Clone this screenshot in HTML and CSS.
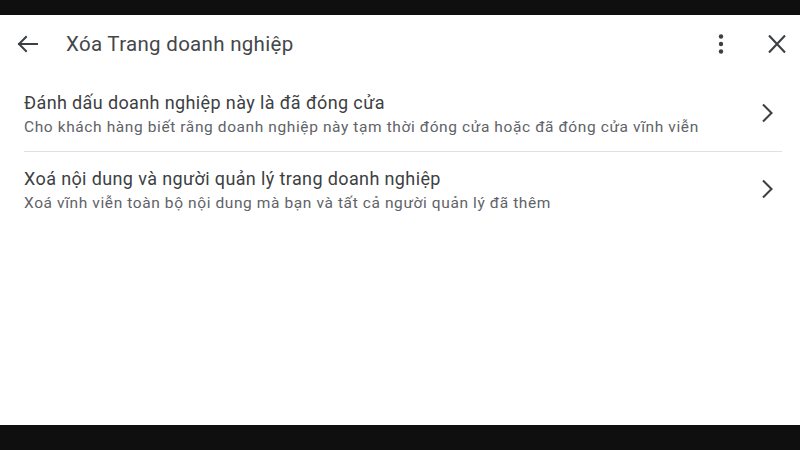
FILE: index.html
```html
<!DOCTYPE html>
<html lang="vi">
<head>
<meta charset="utf-8">
<link rel="stylesheet" href="styles.css">
</head>
<body>
<div class="bar-top"></div>
<main class="screen">
  <header class="appbar">
    <svg class="icon" viewBox="0 0 24 24" width="24" height="24"><path d="M3 12H21M10 5L3 12L10 19" fill="none" stroke="#3c4043" stroke-width="2" stroke-linecap="square" stroke-linejoin="miter"/></svg>
    <h1 class="title">Xóa Trang doanh nghiệp</h1>
    <div class="spacer"></div>
    <svg class="icon" viewBox="0 0 24 24" width="24" height="24"><circle cx="12" cy="4.5" r="2.2" fill="#3c4043"/><circle cx="12" cy="12" r="2.2" fill="#3c4043"/><circle cx="12" cy="19.5" r="2.2" fill="#3c4043"/></svg>
    <svg class="icon close" viewBox="0 0 24 24" width="24" height="24"><path d="M4 3.5L20 20.5M20 3.5L4 20.5" fill="none" stroke="#3c4043" stroke-width="2.1"/></svg>
  </header>
  <section class="list">
    <div class="row first">
      <div class="text">
        <div class="row-title">Đánh dấu doanh nghiệp này là đã đóng cửa</div>
        <div class="row-sub">Cho khách hàng biết rằng doanh nghiệp này tạm thời đóng cửa hoặc đã đóng cửa vĩnh viễn</div>
      </div>
      <svg class="chev" viewBox="0 0 24 24" width="24" height="24"><path d="M7 3.5L15.5 12L7 20.5" fill="none" stroke="#3c4043" stroke-width="2.1"/></svg>
    </div>
    <div class="divider"></div>
    <div class="row second">
      <div class="text">
        <div class="row-title">Xoá nội dung và người quản lý trang doanh nghiệp</div>
        <div class="row-sub">Xoá vĩnh viễn toàn bộ nội dung mà bạn và tất cả người quản lý đã thêm</div>
      </div>
      <svg class="chev" viewBox="0 0 24 24" width="24" height="24"><path d="M7 3.5L15.5 12L7 20.5" fill="none" stroke="#3c4043" stroke-width="2.1"/></svg>
    </div>
  </section>
</main>
<div class="bar-bottom"></div>
</body>
</html>
```

FILE: styles.css
```css
* { box-sizing: border-box; }
html, body {
  margin: 0;
  padding: 0;
  width: 800px;
  height: 450px;
  overflow: hidden;
  background: #0f0f0f;
  font-family: Roboto, "Noto Sans", "Liberation Sans", sans-serif;
}
body {
  display: flex;
  flex-direction: column;
}
.bar-top { height: 15px; background: #0f0f0f; flex: none; }
.bar-bottom { height: 25px; background: #0f0f0f; flex: none; }
.screen {
  height: 410px;
  flex: none;
  background: #ffffff;
  display: flex;
  flex-direction: column;
}
.appbar {
  height: 58px;
  display: flex;
  align-items: center;
  padding: 0 11px 0 16px;
}
.icon { display: block; flex: none; }
.title {
  margin: 0 0 0 26px;
  font-size: 20.5px;
  font-weight: 400;
  color: #44474a;
  letter-spacing: 0.3px;
}
.spacer { flex: 1; }
.close { margin-left: 32px; }
.list {
  padding: 0 18px 0 24px;
}
.row {
  display: flex;
  align-items: center;
}
.row.first { padding: 18px 0 12px; }
.row.second { padding: 15px 0 12px; }
.text { flex: 1; }
.row-title {
  font-size: 18px;
  line-height: 24px;
  color: #3c4043;
  letter-spacing: 0.38px;
}
.row-sub {
  font-size: 15.5px;
  line-height: 24px;
  color: #5f6368;
  letter-spacing: 0.6px;
}
.chev {
  display: block;
  flex: none;
  margin-right: 2px;
  margin-top: -4px;
}
.divider {
  height: 1px;
  background: #e0e0e0;
}
```
